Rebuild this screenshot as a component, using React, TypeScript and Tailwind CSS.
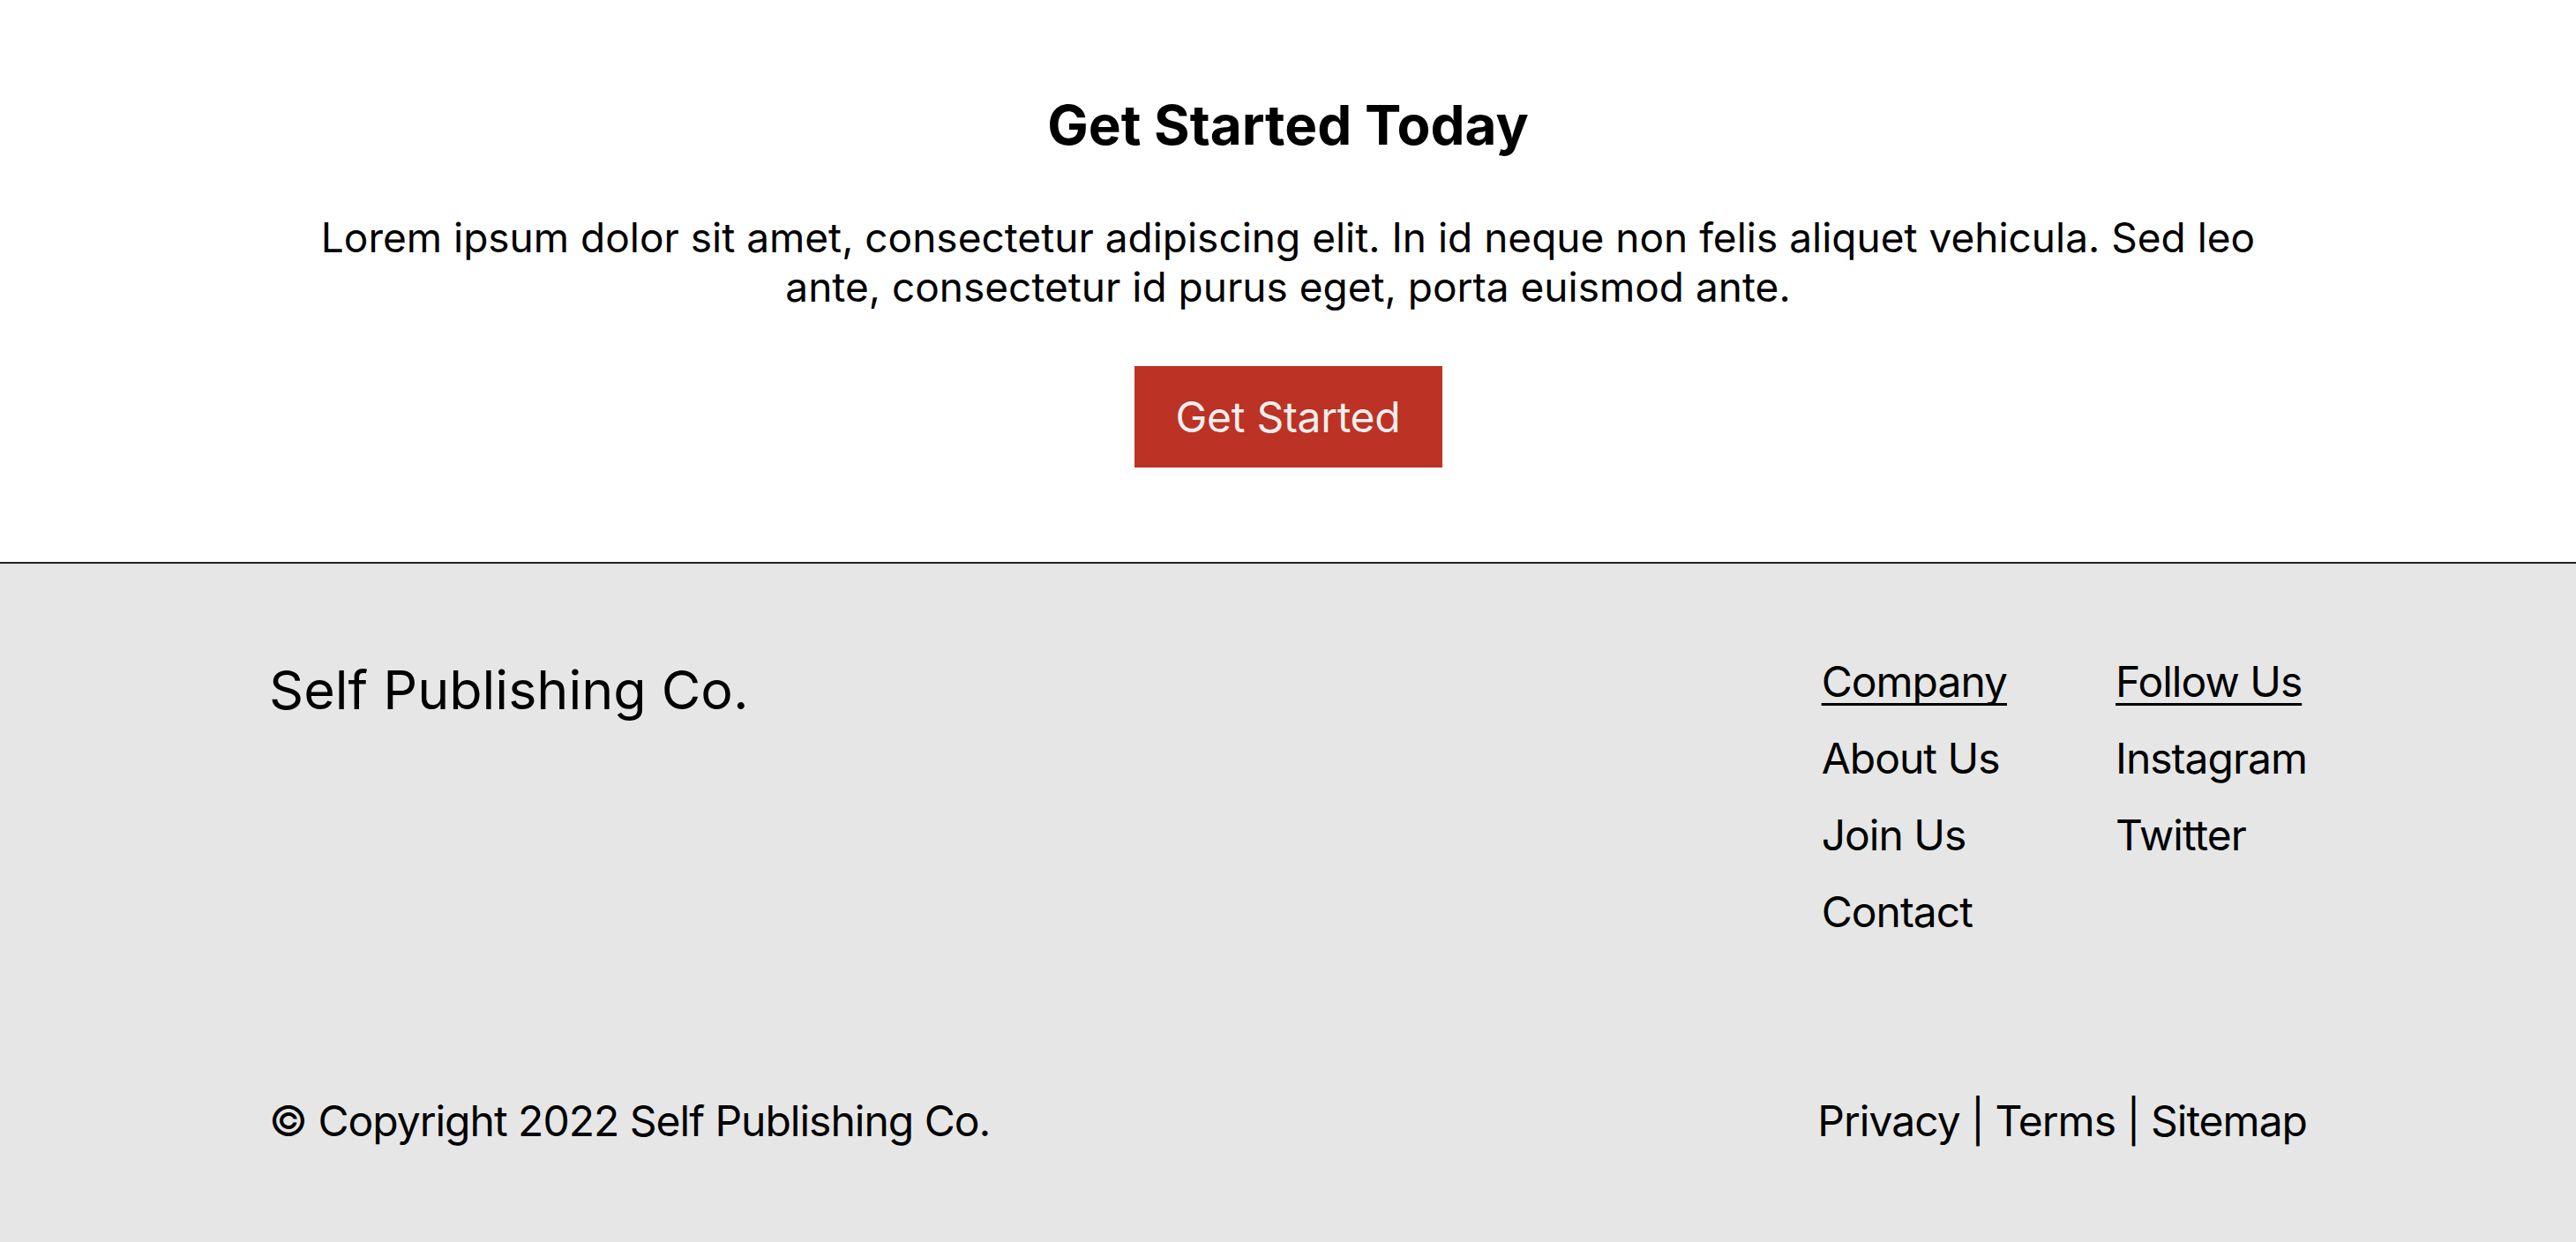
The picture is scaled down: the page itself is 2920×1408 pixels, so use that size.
import React from "react";

export default function App() {
  return (
    <div className="w-full bg-white text-black font-['Inter',sans-serif]">
      <section className="flex flex-col items-center border-b-2 border-[#222] px-[305px] pt-[111px] pb-[107px]">
        <h1 className="text-[62px] font-bold leading-[62px]">Get Started Today</h1>
        <p className="mt-[68px] max-w-[2260px] text-center text-[46px] leading-[56px]">
          Lorem ipsum dolor sit amet, consectetur adipiscing elit. In id neque non felis aliquet vehicula. Sed leo
          ante, consectetur id purus eget, porta euismod ante.
        </p>
        <button className="mt-[62px] flex h-[115px] w-[349px] items-center justify-center bg-[#bc3224] text-[48px] leading-[48px] tracking-[-0.3px] text-[#eeeeee]">
          Get Started
        </button>
      </section>
      <footer className="bg-[#e6e6e6] px-[305px] pt-[90px] pb-[113px]">
        <div className="flex items-start justify-between">
          <div className="mt-[23px] text-[61px] leading-[60px]">Self Publishing Co.</div>
          <div className="flex gap-[123px] text-[48px] leading-[87px] tracking-[-1px]">
            <div className="flex flex-col">
              <span className="underline decoration-[3px] underline-offset-[7px] [text-decoration-skip-ink:none]">Company</span>
              <span>About Us</span>
              <span>Join Us</span>
              <span>Contact</span>
            </div>
            <div className="flex flex-col">
              <span className="underline decoration-[3px] underline-offset-[7px] [text-decoration-skip-ink:none]">Follow Us</span>
              <span>Instagram</span>
              <span>Twitter</span>
            </div>
          </div>
        </div>
        <div className="mt-[170px] flex items-center justify-between text-[48px] leading-[48px] tracking-[-1px]">
          <span>© Copyright 2022 Self Publishing Co.</span>
          <span>Privacy | Terms | Sitemap</span>
        </div>
      </footer>
    </div>
  );
}
